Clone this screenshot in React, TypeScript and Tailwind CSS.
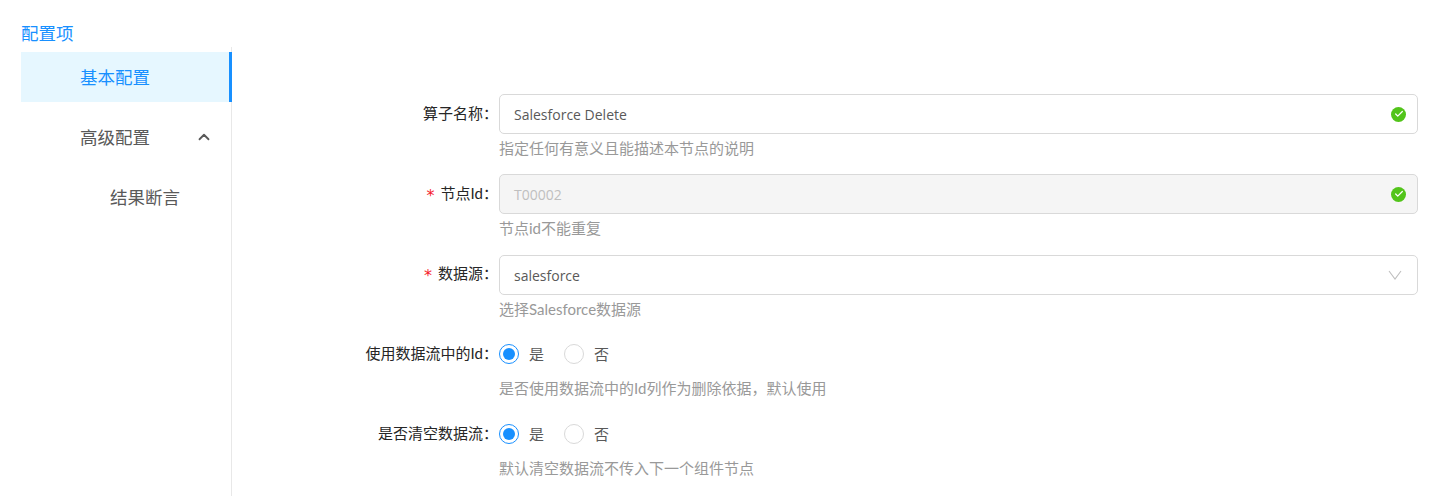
import React from 'react';
import { ChevronUp, Check } from 'lucide-react';

const font = "font-['Lato','Noto_Sans_CJK_SC',sans-serif]";

const Required = () => (
  <span className="mr-[6px] mt-[6px] font-['DejaVu_Sans',sans-serif] text-[16px] text-[#f5222d]">*</span>
);

const StatusIcon = () => (
  <span className="flex h-[15px] w-[15px] items-center justify-center rounded-full bg-[#52c41a]">
    <Check size={10} strokeWidth={3} className="text-white" />
  </span>
);

const SelectArrow = () => (
  <svg width="14" height="10" viewBox="0 0 14 10" fill="none" className="mr-[4px] text-[#bfbfbf]">
    <path d="M1 1l6 8 6-8" stroke="currentColor" strokeWidth="1.1" />
  </svg>
);

const Radio = ({ label, checked }: { label: string; checked?: boolean }) => (
  <label className="flex items-center">
    <span
      className={
        checked
          ? 'flex h-5 w-5 items-center justify-center rounded-full border border-[#1890ff]'
          : 'flex h-5 w-5 items-center justify-center rounded-full border border-[#d9d9d9]'
      }
    >
      {checked && <span className="h-3 w-3 rounded-full bg-[#1890ff]" />}
    </span>
    <span className="ml-[10px] pt-[1px] text-[15px] text-[#595959]">{label}</span>
  </label>
);

const FormRow = ({
  label,
  required,
  help,
  nudge,
  children,
}: {
  label: string;
  required?: boolean;
  help: string;
  nudge?: boolean;
  children: React.ReactNode;
}) => (
  <div className="flex h-[80px]">
    <div className="flex h-10 w-[267px] shrink-0 items-center justify-end pb-[2px] pr-[1px] text-[15px] text-[#262626]">
      {required && <Required />}
      <span>{label}：</span>
    </div>
    <div className="flex-1">
      <div className={nudge ? 'mt-[1px] flex h-10 items-center' : 'flex h-10 items-center'}>{children}</div>
      <div className="mt-[3px] text-[15px] leading-[22px] text-[#999999]">{help}</div>
    </div>
  </div>
);

const TextBox = ({ value, disabled, icon }: { value: string; disabled?: boolean; icon: React.ReactNode }) => (
  <div
    className={
      disabled
        ? "flex h-10 w-full items-center justify-between rounded-[5px] border border-[#d9d9d9] bg-[#f5f5f5] pl-[14px] pr-[11px] font-['Open_Sans',sans-serif] text-[14px] text-[#bfbfbf]"
        : "flex h-10 w-full items-center justify-between rounded-[5px] border border-[#d9d9d9] bg-white pl-[14px] pr-[11px] font-['Open_Sans',sans-serif] text-[14px] text-[#595959]"
    }
  >
    <span>{value}</span>
    {icon}
  </div>
);

export default function App() {
  return (
    <div className={`${font} flex min-h-[496px] bg-white pl-[21px] pr-[33px]`}>
      {/* Sidebar */}
      <aside className="w-[211px] shrink-0 pt-[23px]">
        <div className="h-[24px] text-[17.5px] leading-[22px] text-[#1890ff]">配置项</div>
        <nav className="h-[449px] border-r border-[#e8e8e8] pt-[5px] text-[17.5px]">
          <div className="flex h-[50px] items-center border-r-[3px] border-[#1890ff] bg-[#e6f7ff] pl-[59px] pt-[2px] text-[#1890ff] [margin-right:-1px]">
            基本配置
          </div>
          <div className="mt-[10px] flex h-[50px] items-center justify-between pl-[59px] pr-[18px] pt-[2px] text-[#595959]">
            高级配置
            <ChevronUp size={18} strokeWidth={2.4} className="mb-[2px] text-[#595959]" />
          </div>
          <div className="mt-[10px] flex h-[50px] items-center pl-[89px] pt-[2px] text-[#595959]">结果断言</div>
        </nav>
      </aside>

      {/* Form */}
      <main className="flex-1 pt-[94px]">
        <FormRow label="算子名称" help="指定任何有意义且能描述本节点的说明">
          <TextBox value="Salesforce Delete" icon={<StatusIcon />} />
        </FormRow>
        <FormRow label="节点Id" required help="节点id不能重复">
          <TextBox value="T00002" disabled icon={<StatusIcon />} />
        </FormRow>
        <FormRow label="数据源" required nudge help="选择Salesforce数据源">
          <TextBox value="salesforce" icon={<SelectArrow />} />
        </FormRow>
        <FormRow label="使用数据流中的Id" help="是否使用数据流中的Id列作为删除依据，默认使用">
          <div className="flex gap-[20px]">
            <Radio label="是" checked />
            <Radio label="否" />
          </div>
        </FormRow>
        <FormRow label="是否清空数据流" help="默认清空数据流不传入下一个组件节点">
          <div className="flex gap-[20px]">
            <Radio label="是" checked />
            <Radio label="否" />
          </div>
        </FormRow>
      </main>
    </div>
  );
}
